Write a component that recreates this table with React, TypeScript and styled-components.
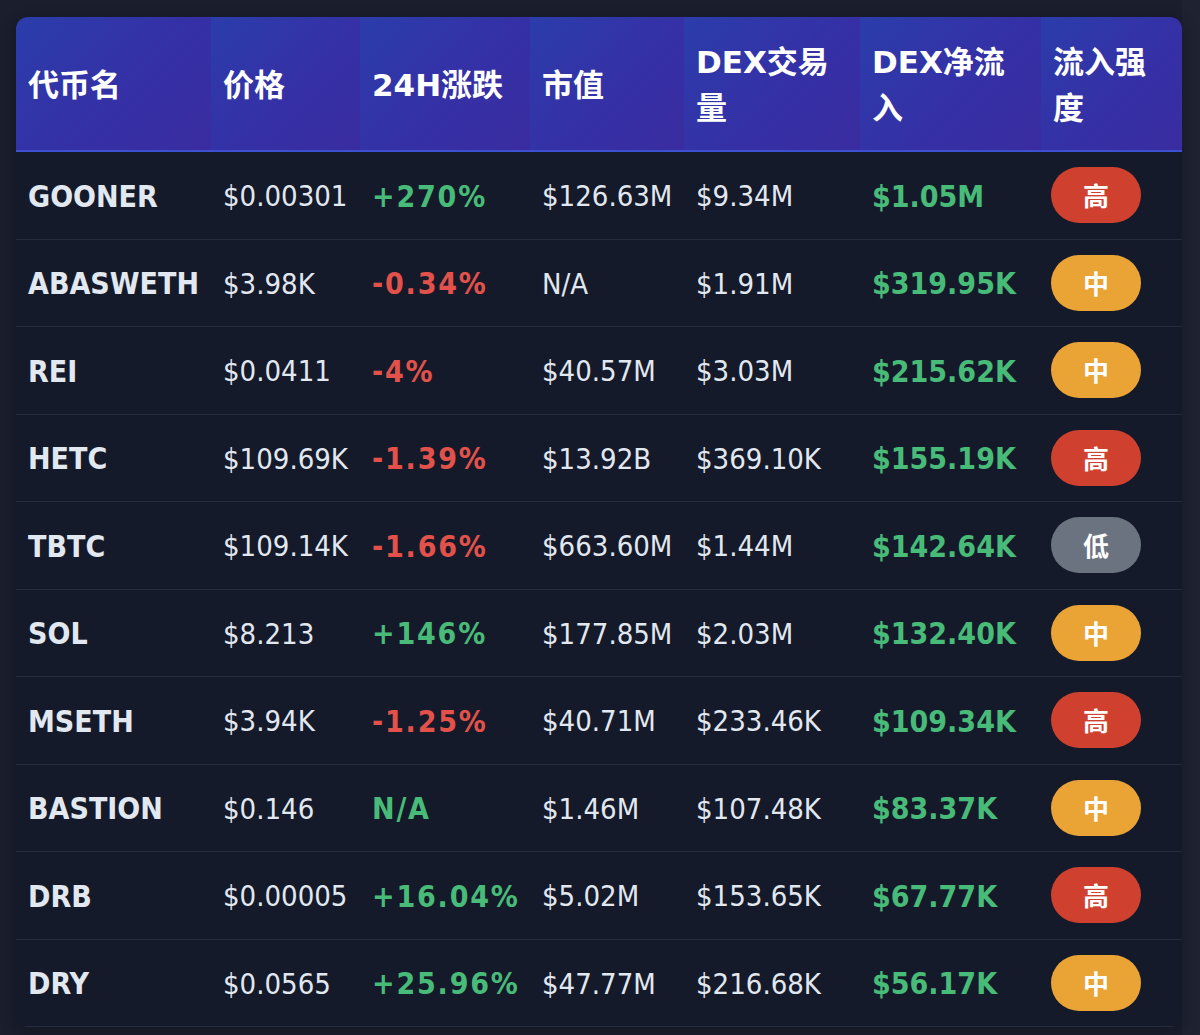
import React from "react";
import styled, { createGlobalStyle } from "styled-components";

const GlobalStyle = createGlobalStyle`
  html, body {
    margin: 0;
    padding: 0;
    background: #1a1e2d;
  }
  body {
    font-family: "DejaVu Sans", "Noto Sans CJK SC", sans-serif;
  }
`;

const Page = styled.div`
  padding: 17px 18px 0 16px;
  background: linear-gradient(90deg, #1a1e2d 0, #1a1e2d 1182px, #1e2231 1182px);
  min-height: 1035px;
  box-sizing: border-box;
`;

const COLS = "195px 149px 170px 154px 176px 181px 141px";

const Table = styled.div`
  width: 1166px;
  background: #151a2a;
  border-radius: 12px;
  overflow: hidden;
  box-shadow: 0 4px 16px rgba(0, 0, 0, 0.25);
`;

const HeadRow = styled.div`
  display: grid;
  grid-template-columns: ${COLS};
  border-bottom: 2px solid #3d50cf;
`;

const HeadCell = styled.div`
  padding: 22px 12px 19px 12px;
  display: flex;
  align-items: center;
  background: linear-gradient(135deg, #2b3dab 0%, #3530a6 55%, #3a2ca0 100%);
  color: #ffffff;
  font-family: "DejaVu Sans", "Noto Sans CJK SC", sans-serif;
  font-weight: 700;
  font-size: 31px;
  line-height: 46px;
  min-height: 92px;
`;

const Row = styled.div`
  display: grid;
  grid-template-columns: ${COLS};
  height: 87.5px;
  box-sizing: border-box;
  border-bottom: 1px solid #262c3e;
  align-items: center;
`;

const Cell = styled.div<{ $tone?: "plain" | "name" | "up" | "down" | "flow" }>`
  padding: 2px 12px 0 12px;
  white-space: nowrap;
  font-family: "DejaVu Sans Condensed", "DejaVu Sans", "Noto Sans CJK SC", sans-serif;
  font-stretch: condensed;
  font-size: ${(p) => (p.$tone === "plain" ? "29px" : "30px")};
  font-weight: ${(p) => (p.$tone === "plain" ? 400 : 700)};
  letter-spacing: ${(p) =>
    p.$tone === "up" || p.$tone === "down" ? "1.8px" : "0"};
  color: ${(p) =>
    p.$tone === "up" || p.$tone === "flow"
      ? "#48bb78"
      : p.$tone === "down"
      ? "#e2524a"
      : "#e2e8f0"};
`;

const BadgeCell = styled.div`
  padding: 0 10px;
  display: flex;
  align-items: center;
`;

const Badge = styled.span<{ $level: "高" | "中" | "低" }>`
  display: inline-block;
  padding: 14px 32px;
  border-radius: 28px;
  font-family: "Noto Sans CJK SC", sans-serif;
  font-weight: 700;
  font-size: 26px;
  line-height: 28px;
  color: #ffffff;
  background: ${(p) =>
    p.$level === "高" ? "#d0402f" : p.$level === "中" ? "#eaa435" : "#6b7280"};
`;

type Item = {
  name: string;
  price: string;
  change: string;
  cap: string;
  vol: string;
  flow: string;
  level: "高" | "中" | "低";
};

const data: Item[] = [
  { name: "GOONER", price: "$0.00301", change: "+270%", cap: "$126.63M", vol: "$9.34M", flow: "$1.05M", level: "高" },
  { name: "ABASWETH", price: "$3.98K", change: "-0.34%", cap: "N/A", vol: "$1.91M", flow: "$319.95K", level: "中" },
  { name: "REI", price: "$0.0411", change: "-4%", cap: "$40.57M", vol: "$3.03M", flow: "$215.62K", level: "中" },
  { name: "HETC", price: "$109.69K", change: "-1.39%", cap: "$13.92B", vol: "$369.10K", flow: "$155.19K", level: "高" },
  { name: "TBTC", price: "$109.14K", change: "-1.66%", cap: "$663.60M", vol: "$1.44M", flow: "$142.64K", level: "低" },
  { name: "SOL", price: "$8.213", change: "+146%", cap: "$177.85M", vol: "$2.03M", flow: "$132.40K", level: "中" },
  { name: "MSETH", price: "$3.94K", change: "-1.25%", cap: "$40.71M", vol: "$233.46K", flow: "$109.34K", level: "高" },
  { name: "BASTION", price: "$0.146", change: "N/A", cap: "$1.46M", vol: "$107.48K", flow: "$83.37K", level: "中" },
  { name: "DRB", price: "$0.00005", change: "+16.04%", cap: "$5.02M", vol: "$153.65K", flow: "$67.77K", level: "高" },
  { name: "DRY", price: "$0.0565", change: "+25.96%", cap: "$47.77M", vol: "$216.68K", flow: "$56.17K", level: "中" },
];

const headers = ["代币名", "价格", "24H涨跌", "市值", "DEX交易量", "DEX净流入", "流入强度"];

export default function App() {
  return (
    <>
      <GlobalStyle />
      <Page>
        <Table>
          <HeadRow>
            {headers.map((h) => (
              <HeadCell key={h}>{h}</HeadCell>
            ))}
          </HeadRow>
          {data.map((d) => (
            <Row key={d.name}>
              <Cell $tone="name">{d.name}</Cell>
              <Cell $tone="plain">{d.price}</Cell>
              <Cell $tone={d.change.startsWith("-") ? "down" : "up"}>{d.change}</Cell>
              <Cell $tone="plain">{d.cap}</Cell>
              <Cell $tone="plain">{d.vol}</Cell>
              <Cell $tone="flow">{d.flow}</Cell>
              <BadgeCell>
                <Badge $level={d.level}>{d.level}</Badge>
              </BadgeCell>
            </Row>
          ))}
        </Table>
      </Page>
    </>
  );
}
